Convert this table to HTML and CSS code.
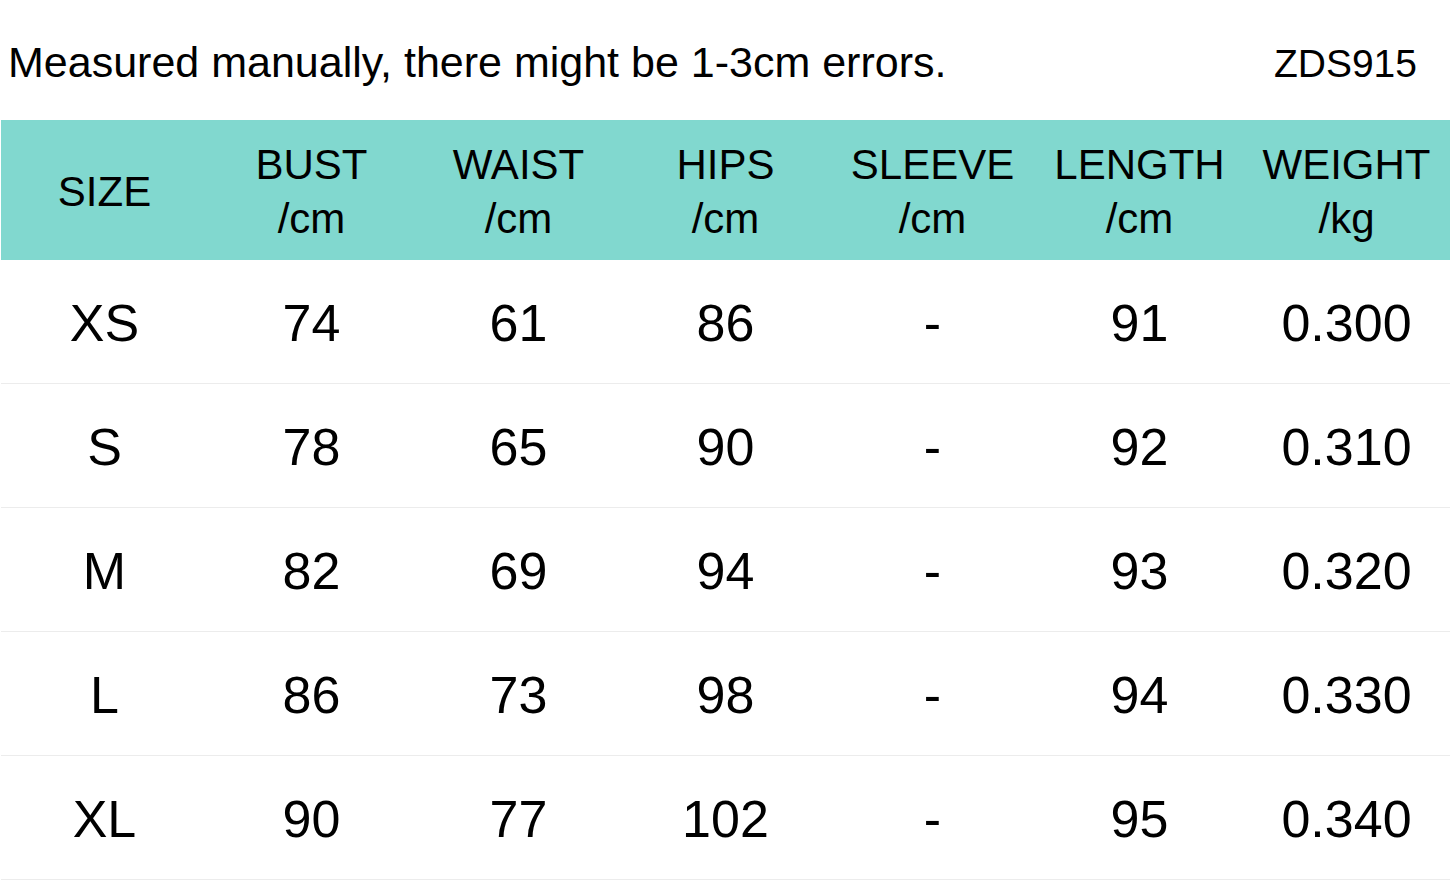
FILE: index.html
```html
<!DOCTYPE html>
<html>
<head>
<meta charset="utf-8">
<link rel="stylesheet" href="styles.css">
</head>
<body>
<div class="page">
  <div class="topline">
    <span class="note">Measured manually, there might be 1-3cm errors.</span>
    <span class="code">ZDS915</span>
  </div>
  <div class="table">
    <div class="row head">
      <div class="cell">SIZE</div>
      <div class="cell">BUST<br>/cm</div>
      <div class="cell">WAIST<br>/cm</div>
      <div class="cell">HIPS<br>/cm</div>
      <div class="cell">SLEEVE<br>/cm</div>
      <div class="cell">LENGTH<br>/cm</div>
      <div class="cell">WEIGHT<br>/kg</div>
    </div>
    <div class="row body">
      <div class="cell">XS</div><div class="cell">74</div><div class="cell">61</div><div class="cell">86</div><div class="cell">-</div><div class="cell">91</div><div class="cell">0.300</div>
    </div>
    <div class="row body">
      <div class="cell">S</div><div class="cell">78</div><div class="cell">65</div><div class="cell">90</div><div class="cell">-</div><div class="cell">92</div><div class="cell">0.310</div>
    </div>
    <div class="row body">
      <div class="cell">M</div><div class="cell">82</div><div class="cell">69</div><div class="cell">94</div><div class="cell">-</div><div class="cell">93</div><div class="cell">0.320</div>
    </div>
    <div class="row body">
      <div class="cell">L</div><div class="cell">86</div><div class="cell">73</div><div class="cell">98</div><div class="cell">-</div><div class="cell">94</div><div class="cell">0.330</div>
    </div>
    <div class="row body">
      <div class="cell">XL</div><div class="cell">90</div><div class="cell">77</div><div class="cell">102</div><div class="cell">-</div><div class="cell">95</div><div class="cell">0.340</div>
    </div>
  </div>
</div>
</body>
</html>
```
FILE: styles.css
```css
html, body {
  margin: 0;
  padding: 0;
  background: #ffffff;
}
body {
  font-family: "Liberation Sans", Arial, sans-serif;
  color: #000000;
}
.page {
  width: 1451px;
  height: 882px;
  overflow: hidden;
}
.topline {
  height: 120px;
  box-sizing: border-box;
  padding: 38px 34px 0 8px;
  display: flex;
  justify-content: space-between;
  align-items: baseline;
  line-height: 1.15;
}
.note {
  font-size: 43px;
}
.code {
  font-size: 39px;
}
.table {
  padding: 0 1px;
}
.row {
  display: grid;
  grid-template-columns: repeat(7, 1fr);
}
.row.head {
  height: 140px;
  box-sizing: border-box;
  padding-top: 4px;
  background: #81d8cf;
  font-size: 42px;
  line-height: 54px;
}
.row.body {
  height: 124px;
  box-sizing: border-box;
  border-bottom: 1px solid #ececec;
  font-size: 52px;
}
.cell {
  display: flex;
  align-items: center;
  justify-content: center;
  text-align: center;
  white-space: nowrap;
}
.row.body .cell {
  padding-top: 2px;
}
```
